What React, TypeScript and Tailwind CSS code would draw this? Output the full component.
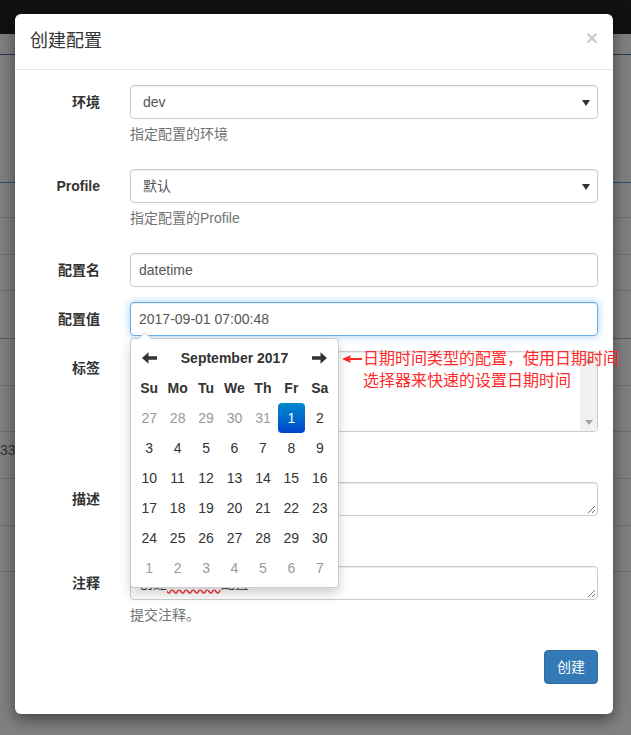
import React from 'react';

const font = "font-['Liberation_Sans','Noto_Sans_CJK_SC',sans-serif]";

// background rows behind the modal overlay: [height, border colour]
const bgRows: [number, string][] = [
  [21, '#24374d'],
  [128, '#24507a'],
  [35, '#6e6e6e'],
  [37, '#6e6e6e'],
  [36, '#6e6e6e'],
  [48, '#5c5c5c'],
  [47, '#6e6e6e'],
  [46, '#6e6e6e'],
  [47, '#6e6e6e'],
  [47, '#6e6e6e'],
  [46, '#6e6e6e'],
];

const weeks: { d: number; muted: boolean }[][] = [
  [27, 28, 29, 30, 31, 1, 2].map((d, i) => ({ d, muted: i < 5 })),
  [3, 4, 5, 6, 7, 8, 9].map((d) => ({ d, muted: false })),
  [10, 11, 12, 13, 14, 15, 16].map((d) => ({ d, muted: false })),
  [17, 18, 19, 20, 21, 22, 23].map((d) => ({ d, muted: false })),
  [24, 25, 26, 27, 28, 29, 30].map((d) => ({ d, muted: false })),
  [1, 2, 3, 4, 5, 6, 7].map((d) => ({ d, muted: true })),
];

function ArrowIcon({ dir }: { dir: 'left' | 'right' }) {
  return (
    <svg width="15" height="12" viewBox="0 0 15 12" className={dir === 'right' ? 'rotate-180' : ''}>
      <path d="M0 6 L6.5 0.3 L6.5 4.2 L15 4.2 L15 7.8 L6.5 7.8 L6.5 11.7 Z" fill="#333" />
    </svg>
  );
}

function ResizeHandle() {
  return (
    <svg width="9" height="9" viewBox="0 0 9 9" className="absolute right-[1px] bottom-[1px]">
      <path d="M8 1 L1 8 M8 5 L5 8" stroke="#777" strokeWidth="1" />
    </svg>
  );
}

function Caret() {
  return (
    <svg width="8" height="6" viewBox="0 0 8 6" className="absolute right-[7px] top-[14px]">
      <path d="M0 0 L8 0 L4 6 Z" fill="#333" />
    </svg>
  );
}

function DatePicker() {
  return (
    <div className="absolute left-0 top-[36px] z-10 w-[209px] p-[4px] bg-white border border-[#ccc] rounded-[4px] shadow-[0_6px_12px_rgba(0,0,0,0.18)]">
      <div className="absolute left-[7px] top-[-7px] w-0 h-0 border-x-[7px] border-x-transparent border-b-[7px] border-b-[#ccc]" />
      <div className="absolute left-[8px] top-[-6px] w-0 h-0 border-x-[6px] border-x-transparent border-b-[6px] border-b-white" />
      <div className="grid grid-cols-7 text-[14px] text-[#333] text-center">
        <div className="h-[30px] flex items-center justify-center">
          <ArrowIcon dir="left" />
        </div>
        <div className="col-span-5 h-[30px] flex items-center justify-center font-bold">September 2017</div>
        <div className="h-[30px] flex items-center justify-center">
          <ArrowIcon dir="right" />
        </div>
        {['Su', 'Mo', 'Tu', 'We', 'Th', 'Fr', 'Sa'].map((n) => (
          <div key={n} className="h-[30px] flex items-center justify-center font-bold">
            {n}
          </div>
        ))}
        {weeks.map((w, wi) =>
          w.map((c, ci) => {
            const active = wi === 0 && c.d === 1;
            return (
              <div key={`${wi}-${ci}`} className="h-[30px] flex items-center justify-center">
                {active ? (
                  <div className="w-[27px] h-[30px] flex items-center justify-center rounded-[4px] bg-linear-to-b from-[#0088cc] to-[#0044cc] text-white">
                    {c.d}
                  </div>
                ) : (
                  <span className={c.muted ? 'text-[#999]' : ''}>{c.d}</span>
                )}
              </div>
            );
          })
        )}
      </div>
    </div>
  );
}

function Row({ label, children }: { label: string; children: React.ReactNode }) {
  return (
    <div className="flex gap-[30px] mb-[15px]">
      <div className="w-[70px] shrink-0 pt-[7px] text-right font-bold text-[14px] leading-[20px] text-[#333]">{label}</div>
      <div className="flex-1 min-w-0">{children}</div>
    </div>
  );
}

const box = 'relative h-[34px] py-[6px] border border-[#ccc] rounded-[4px] bg-white text-[14px] leading-[20px] text-[#555] shadow-[inset_0_1px_1px_rgba(0,0,0,0.075)]';

function Help({ children }: { children?: React.ReactNode }) {
  return <div className="mt-[5px] mb-[10px] h-[20px] text-[14px] leading-[20px] text-[#737373]">{children}</div>;
}

export default function App() {
  return (
    <div className={`relative h-[735px] overflow-hidden bg-[#808080] ${font}`}>
      <div className="h-[34px] bg-[#111]" />
      {bgRows.map(([h, c], i) => (
        <div key={i} className="border-b" style={{ height: h, borderColor: c }} />
      ))}
      <div className="absolute left-0 top-[440px] text-[14px] text-[#333]">33</div>

      {/* modal */}
      <div className="absolute left-[15px] top-[14px] w-[598px] h-[700px] bg-white rounded-[6px] shadow-[0_5px_15px_rgba(0,0,0,0.5)]">
        <div className="relative h-[56px] px-[15px] pt-[14px] border-b border-[#e5e5e5]">
          <div className="text-[18px] leading-[26px] text-[#333]">创建配置</div>
          <div className="absolute right-[15px] top-[13px] text-[21px] font-bold leading-[21px] text-[#cccccc]">×</div>
        </div>
        <div className="px-[15px] pt-[15px]">
          <Row label="环境">
            <div className={`${box} px-[12px]`}>
              dev
              <Caret />
            </div>
            <Help>指定配置的环境</Help>
          </Row>
          <Row label="Profile">
            <div className={`${box} px-[12px]`}>
              默认
              <Caret />
            </div>
            <Help>指定配置的Profile</Help>
          </Row>
          <Row label="配置名">
            <div className={`${box} px-[8px]`}>datetime</div>
          </Row>
          <Row label="配置值">
            <div className="relative">
              <div className={`${box} px-[8px] !border-[#66afe9] !shadow-[inset_0_1px_1px_rgba(0,0,0,0.075),0_0_8px_rgba(102,175,233,0.6)]`}>
                2017-09-01 07:00:48
              </div>
              <DatePicker />
            </div>
          </Row>
          <Row label="标签">
            <div className={`${box} !h-[81px] !p-0 overflow-hidden`}>
              <div className="absolute right-0 top-0 bottom-0 w-[17px] bg-[#f1f1f1] flex flex-col items-center justify-between py-[6px]">
                <svg width="8" height="5" viewBox="0 0 8 5">
                  <path d="M0 5 L8 5 L4 0 Z" fill="#a3a3a3" />
                </svg>
                <svg width="8" height="5" viewBox="0 0 8 5">
                  <path d="M0 0 L8 0 L4 5 Z" fill="#a3a3a3" />
                </svg>
              </div>
            </div>
            <Help />
          </Row>
          <Row label="描述">
            <div className={`${box} px-[8px]`}>
              <ResizeHandle />
            </div>
            <Help />
          </Row>
          <Row label="注释">
            <div className={`${box} px-[8px]`}>
              <span className="text-[#333]">
                创建<span className="underline decoration-wavy decoration-red-500">datetime</span>配置
              </span>
              <ResizeHandle />
            </div>
            <Help>提交注释。</Help>
          </Row>
          <div className="flex justify-end">
            <div className="h-[34px] px-[12px] flex items-center rounded-[4px] bg-[#337ab7] border border-[#2e6da4] text-white text-[14px]">
              创建
            </div>
          </div>
        </div>
      </div>

      {/* annotation */}
      <svg width="20" height="10" viewBox="0 0 20 10" className="absolute left-[342px] top-[354px]">
        <path d="M0 5 L9 1 L8 4 L20 4 L20 6 L8 6 L9 9 Z" fill="#ff2a2a" />
      </svg>
      <div className="absolute left-[363px] top-[348px] text-[16px] leading-[22px] text-[#ff2a2a] whitespace-nowrap">
        <div>日期时间类型的配置，使用日期时间</div>
        <div>选择器来快速的设置日期时间</div>
      </div>
    </div>
  );
}
